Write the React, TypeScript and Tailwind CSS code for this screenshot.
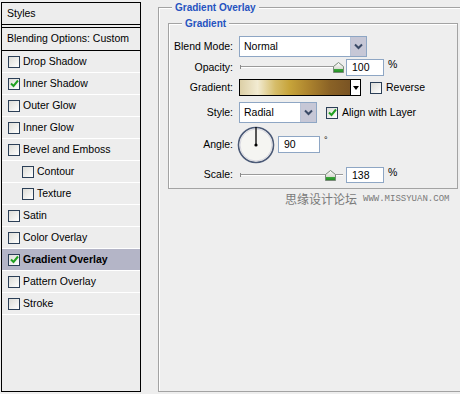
import React from "react";

const rows = [
  { label: "Drop Shadow" },
  { label: "Inner Shadow", checked: true },
  { label: "Outer Glow" },
  { label: "Inner Glow" },
  { label: "Bevel and Emboss" },
  { label: "Contour", indent: true },
  { label: "Texture", indent: true },
  { label: "Satin" },
  { label: "Color Overlay" },
  { label: "Gradient Overlay", checked: true, active: true },
  { label: "Pattern Overlay" },
  { label: "Stroke" },
];

function Check({ checked }: { checked?: boolean }) {
  return (
    <span className="w-[12px] h-[12px] border border-[#2b3f57] bg-linear-to-br from-[#dcdcd7] to-white flex items-center justify-center shrink-0">
      {checked && (
        <svg width="9" height="9" viewBox="0 0 9 9">
          <path d="M1 4.5 L3.5 7 L8 1.5" fill="none" stroke="#21a121" strokeWidth="2" />
        </svg>
      )}
    </span>
  );
}

function Chevron() {
  return (
    <span className="w-[16px] h-full bg-[#c6c7d6] border-l border-[#b9c3d6] flex items-center justify-center">
      <svg width="9" height="7" viewBox="0 0 9 7">
        <path d="M1 1.5 L4.5 5 L8 1.5" fill="none" stroke="#3a4a66" strokeWidth="2" />
      </svg>
    </span>
  );
}

function Slider({ at }: { at: number }) {
  return (
    <div className="relative w-[106px] h-full">
      <div className="absolute left-[3px] right-0 top-[7px] h-[2px] border-t border-[#9a9a9a] border-b border-b-white" />
      <div className="absolute left-[3px] top-[6px] w-[1px] h-[4px] bg-[#8a8a8a]" />
      <svg className="absolute top-[3px]" style={{ left: at }} width="11" height="11" viewBox="0 0 11 11">
        <defs>
          <linearGradient id={"th" + at} x1="0" y1="0" x2="0" y2="1">
            <stop offset="0" stopColor="#ffffff" />
            <stop offset="0.6" stopColor="#dcdcd4" />
            <stop offset="0.7" stopColor="#3aa43a" />
            <stop offset="1" stopColor="#1f8a1f" />
          </linearGradient>
        </defs>
        <path d="M5.5 0.5 L10.5 4.5 L10.5 10.5 L0.5 10.5 L0.5 4.5 Z" fill={`url(#th${at})`} stroke="#7a8a7a" />
      </svg>
    </div>
  );
}

function Field({ value, w }: { value: string; w: string }) {
  return (
    <span className={`${w} h-full bg-white border border-[#8ea6c4] flex items-center pl-[5px] leading-none`}>
      {value}
    </span>
  );
}

function Label({ children }: { children: React.ReactNode }) {
  return <span className="w-[64px] text-right shrink-0">{children}</span>;
}

export default function App() {
  return (
    <div className="w-[460px] h-[394px] overflow-hidden bg-[#eeeeee] flex items-start text-[10.5px] text-black font-['Liberation_Sans',Tahoma,sans-serif]">
      {/* Styles list */}
      <div className="ml-[1px] mt-[2px] w-[140px] h-[390px] border border-black bg-[#ededed] flex flex-col shrink-0">
        <div className="h-[22px] border-b border-black flex items-center pl-[5px]">Styles</div>
        <div className="h-[3px] border-b border-black" />
        <div className="h-[23px] border-b border-black flex items-center pl-[5px]">Blending Options: Custom</div>
        {rows.map((r) => (
          <div
            key={r.label}
            className={`h-[22px] border-b border-white flex items-center gap-[3px] ${r.indent ? "pl-[20px]" : "pl-[6px]"} ${r.active ? "bg-[#b4b5c7] font-bold" : ""}`}
          >
            <Check checked={r.checked} />
            <span>{r.label}</span>
          </div>
        ))}
      </div>

      {/* Gradient Overlay group */}
      <div className="relative ml-[17px] mt-[7px] w-[310px] h-[385px] border border-[#a3a3a3] shadow-[inset_1px_1px_0_#fff] shrink-0 flex flex-col">
        <span className="absolute left-[13px] -top-[7px] px-[3px] bg-[#eeeeee] text-[10px] leading-[13px] font-bold text-[#2553c0]">
          Gradient Overlay
        </span>

        <div className="relative ml-[9px] mt-[15px] w-[290px] h-[166px] border border-[#a3a3a3] shadow-[inset_1px_1px_0_#fff] pt-[12px] flex flex-col">
          <span className="absolute left-[13px] -top-[7px] px-[3px] bg-[#eeeeee] text-[10px] leading-[13px] font-bold text-[#2553c0]">
            Gradient
          </span>

          <div className="h-[21px] flex items-center">
            <Label>Blend Mode:</Label>
            <div className="ml-[6px] w-[128px] h-full bg-white border border-[#8ea6c4] flex items-center">
              <span className="flex-1 pl-[4px]">Normal</span>
              <Chevron />
            </div>
          </div>

          <div className="mt-[2px] h-[17px] flex items-center">
            <Label>Opacity:</Label>
            <div className="ml-[4px] h-full">
              <Slider at={96} />
            </div>
            <span className="ml-[3px] h-full flex">
              <Field value="100" w="w-[38px]" />
            </span>
            <span className="ml-[4px] self-start -mt-[2px]">%</span>
          </div>

          <div className="mt-[3px] h-[17px] flex items-center">
            <Label>Gradient:</Label>
            <div className="ml-[6px] w-[122px] h-full border border-black flex">
              <div className="flex-1 bg-[linear-gradient(to_right,#dccfa6_0%,#f2ebd2_16%,#d6bd6a_32%,#c7a43a_45%,#ad842e_62%,#8a6226_82%,#7a5424_100%)]" />
              <div className="w-[10px] border-l border-black bg-white flex items-center justify-center">
                <svg width="6" height="4" viewBox="0 0 6 4">
                  <path d="M0 0 L6 0 L3 4 Z" fill="#000" />
                </svg>
              </div>
            </div>
            <span className="ml-[9px]">
              <Check />
            </span>
            <span className="ml-[4px]">Reverse</span>
          </div>

          <div className="mt-[6px] h-[21px] flex items-center">
            <Label>Style:</Label>
            <div className="ml-[6px] w-[78px] h-full bg-white border border-[#8ea6c4] flex items-center">
              <span className="flex-1 pl-[4px]">Radial</span>
              <Chevron />
            </div>
            <span className="ml-[9px]">
              <Check checked />
            </span>
            <span className="ml-[4px]">Align with Layer</span>
          </div>

          <div className="mt-[3px] h-[38px] flex items-center">
            <Label>Angle:</Label>
            <svg className="ml-[4px]" width="38" height="38" viewBox="0 0 38 38">
              <circle cx="19" cy="19" r="17.5" fill="#f5f5f2" stroke="#4b5a77" strokeWidth="1.6" />
              <circle cx="19" cy="19" r="16" fill="none" stroke="#d8d8e0" strokeWidth="1" />
              <line x1="19" y1="1" x2="19" y2="19" stroke="#000" strokeWidth="1.3" />
              <circle cx="19" cy="19" r="1.6" fill="#000" />
            </svg>
            <span className="ml-[3px] h-[17px] flex -mt-[2px]">
              <Field value="90" w="w-[42px]" />
            </span>
            <span className="ml-[4px] self-start mt-[8px] text-[9px]">°</span>
          </div>

          <div className="mt-[3px] h-[16px] flex items-center">
            <Label>Scale:</Label>
            <div className="ml-[4px] h-full">
              <Slider at={88} />
            </div>
            <span className="ml-[3px] h-full flex">
              <Field value="138" w="w-[38px]" />
            </span>
            <span className="ml-[4px] self-start -mt-[2px]">%</span>
          </div>
        </div>

        <div className="mt-[3px] ml-[126px] flex items-center gap-[6px] text-[#7a7a7a]">
          <span className="text-[12px] leading-[14px] font-['Noto_Sans_CJK_SC',sans-serif]">思缘设计论坛</span>
          <span className="text-[9px] leading-[14px] font-['Liberation_Mono',monospace]">WWW.MISSYUAN.COM</span>
        </div>
      </div>
    </div>
  );
}
